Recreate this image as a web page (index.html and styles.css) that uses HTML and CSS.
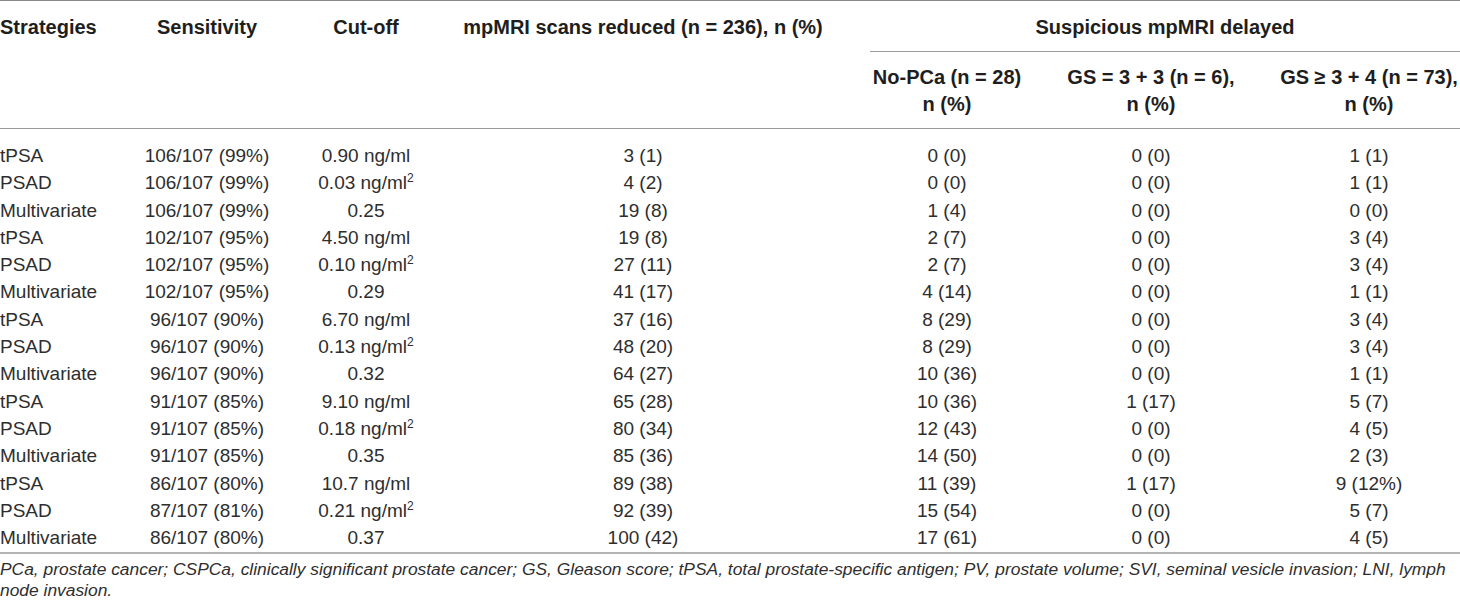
FILE: index.html
```html
<!DOCTYPE html>
<html>
<head>
<meta charset="utf-8">
<link rel="stylesheet" href="styles.css">
</head>
<body>
<div class="wrap">
<table class="tbl">
  <colgroup>
    <col class="c1"><col class="c2"><col class="c3"><col class="c4"><col class="c5"><col class="c6"><col class="c7">
  </colgroup>
  <thead>
    <tr>
      <th rowspan="2" class="left top">Strategies</th>
      <th rowspan="2" class="top">Sensitivity</th>
      <th rowspan="2" class="top">Cut-off</th>
      <th rowspan="2" class="top">mpMRI scans reduced (n = 236), n (%)</th>
      <th colspan="3" class="group">Suspicious mpMRI delayed</th>
    </tr>
    <tr>
      <th class="sub">No-PCa (n = 28)<br>n (%)</th>
      <th class="sub">GS = 3 + 3 (n = 6),<br>n (%)</th>
      <th class="sub">GS ≥ 3 + 4 (n = 73),<br>n (%)</th>
    </tr>
  </thead>
  <tbody>
    <tr><td class="left">tPSA</td><td>106/107 (99%)</td><td>0.90 ng/ml</td><td>3 (1)</td><td>0 (0)</td><td>0 (0)</td><td>1 (1)</td></tr>
    <tr><td class="left">PSAD</td><td>106/107 (99%)</td><td>0.03 ng/ml<sup>2</sup></td><td>4 (2)</td><td>0 (0)</td><td>0 (0)</td><td>1 (1)</td></tr>
    <tr><td class="left">Multivariate</td><td>106/107 (99%)</td><td>0.25</td><td>19 (8)</td><td>1 (4)</td><td>0 (0)</td><td>0 (0)</td></tr>
    <tr><td class="left">tPSA</td><td>102/107 (95%)</td><td>4.50 ng/ml</td><td>19 (8)</td><td>2 (7)</td><td>0 (0)</td><td>3 (4)</td></tr>
    <tr><td class="left">PSAD</td><td>102/107 (95%)</td><td>0.10 ng/ml<sup>2</sup></td><td>27 (11)</td><td>2 (7)</td><td>0 (0)</td><td>3 (4)</td></tr>
    <tr><td class="left">Multivariate</td><td>102/107 (95%)</td><td>0.29</td><td>41 (17)</td><td>4 (14)</td><td>0 (0)</td><td>1 (1)</td></tr>
    <tr><td class="left">tPSA</td><td>96/107 (90%)</td><td>6.70 ng/ml</td><td>37 (16)</td><td>8 (29)</td><td>0 (0)</td><td>3 (4)</td></tr>
    <tr><td class="left">PSAD</td><td>96/107 (90%)</td><td>0.13 ng/ml<sup>2</sup></td><td>48 (20)</td><td>8 (29)</td><td>0 (0)</td><td>3 (4)</td></tr>
    <tr><td class="left">Multivariate</td><td>96/107 (90%)</td><td>0.32</td><td>64 (27)</td><td>10 (36)</td><td>0 (0)</td><td>1 (1)</td></tr>
    <tr><td class="left">tPSA</td><td>91/107 (85%)</td><td>9.10 ng/ml</td><td>65 (28)</td><td>10 (36)</td><td>1 (17)</td><td>5 (7)</td></tr>
    <tr><td class="left">PSAD</td><td>91/107 (85%)</td><td>0.18 ng/ml<sup>2</sup></td><td>80 (34)</td><td>12 (43)</td><td>0 (0)</td><td>4 (5)</td></tr>
    <tr><td class="left">Multivariate</td><td>91/107 (85%)</td><td>0.35</td><td>85 (36)</td><td>14 (50)</td><td>0 (0)</td><td>2 (3)</td></tr>
    <tr><td class="left">tPSA</td><td>86/107 (80%)</td><td>10.7 ng/ml</td><td>89 (38)</td><td>11 (39)</td><td>1 (17)</td><td>9 (12%)</td></tr>
    <tr><td class="left">PSAD</td><td>87/107 (81%)</td><td>0.21 ng/ml<sup>2</sup></td><td>92 (39)</td><td>15 (54)</td><td>0 (0)</td><td>5 (7)</td></tr>
    <tr><td class="left">Multivariate</td><td>86/107 (80%)</td><td>0.37</td><td>100 (42)</td><td>17 (61)</td><td>0 (0)</td><td>4 (5)</td></tr>
  </tbody>
</table>
<p class="note">PCa, prostate cancer; CSPCa, clinically significant prostate cancer; GS, Gleason score; tPSA, total prostate-specific antigen; PV, prostate volume; SVI, seminal vesicle invasion; LNI, lymph node invasion.</p>
</div>
</body>
</html>
```
FILE: styles.css
```css
html, body {
  margin: 0;
  padding: 0;
  background: #ffffff;
}

.wrap {
  width: 1460px;
  font-family: "Liberation Sans", Arial, sans-serif;
}

.tbl {
  width: 1460px;
  border-collapse: collapse;
  table-layout: fixed;
  border-top: 1px solid #8a8a8a;
  border-bottom: 2px solid #b4b4b4;
}

.c1 { width: 98px; }
.c2 { width: 218px; }
.c3 { width: 100px; }
.c4 { width: 454px; }
.c5 { width: 154px; }
.c6 { width: 254px; }
.c7 { width: 182px; }

.tbl th {
  font-size: 20px;
  font-weight: bold;
  color: #1e1e1e;
  line-height: 27px;
  text-align: center;
  padding: 0;
  white-space: nowrap;
}

.tbl th.top {
  vertical-align: top;
  padding-top: 13px;
  border-bottom: 1px solid #9a9a9a;
}

.tbl th.group {
  padding: 13px 0 10px 0;
  border-bottom: 1px solid #9a9a9a;
}

.tbl th.sub {
  padding: 12px 0 10px 0;
  border-bottom: 1px solid #9a9a9a;
}

.tbl .left {
  text-align: left;
}

.tbl td {
  font-size: 19px;
  color: #2e2e2e;
  line-height: 27.3px;
  padding: 0;
  text-align: center;
  white-space: nowrap;
}

.tbl tbody tr:first-child td {
  padding-top: 13px;
}

.tbl tbody tr:last-child td {
  padding-bottom: 1px;
}

.tbl sup {
  font-size: 12px;
  line-height: 0;
  vertical-align: 7px;
}

.note {
  margin: 5px 0 0 0;
  font-size: 17.4px;
  line-height: 21px;
  font-style: italic;
  color: #2e2e2e;
}
```
